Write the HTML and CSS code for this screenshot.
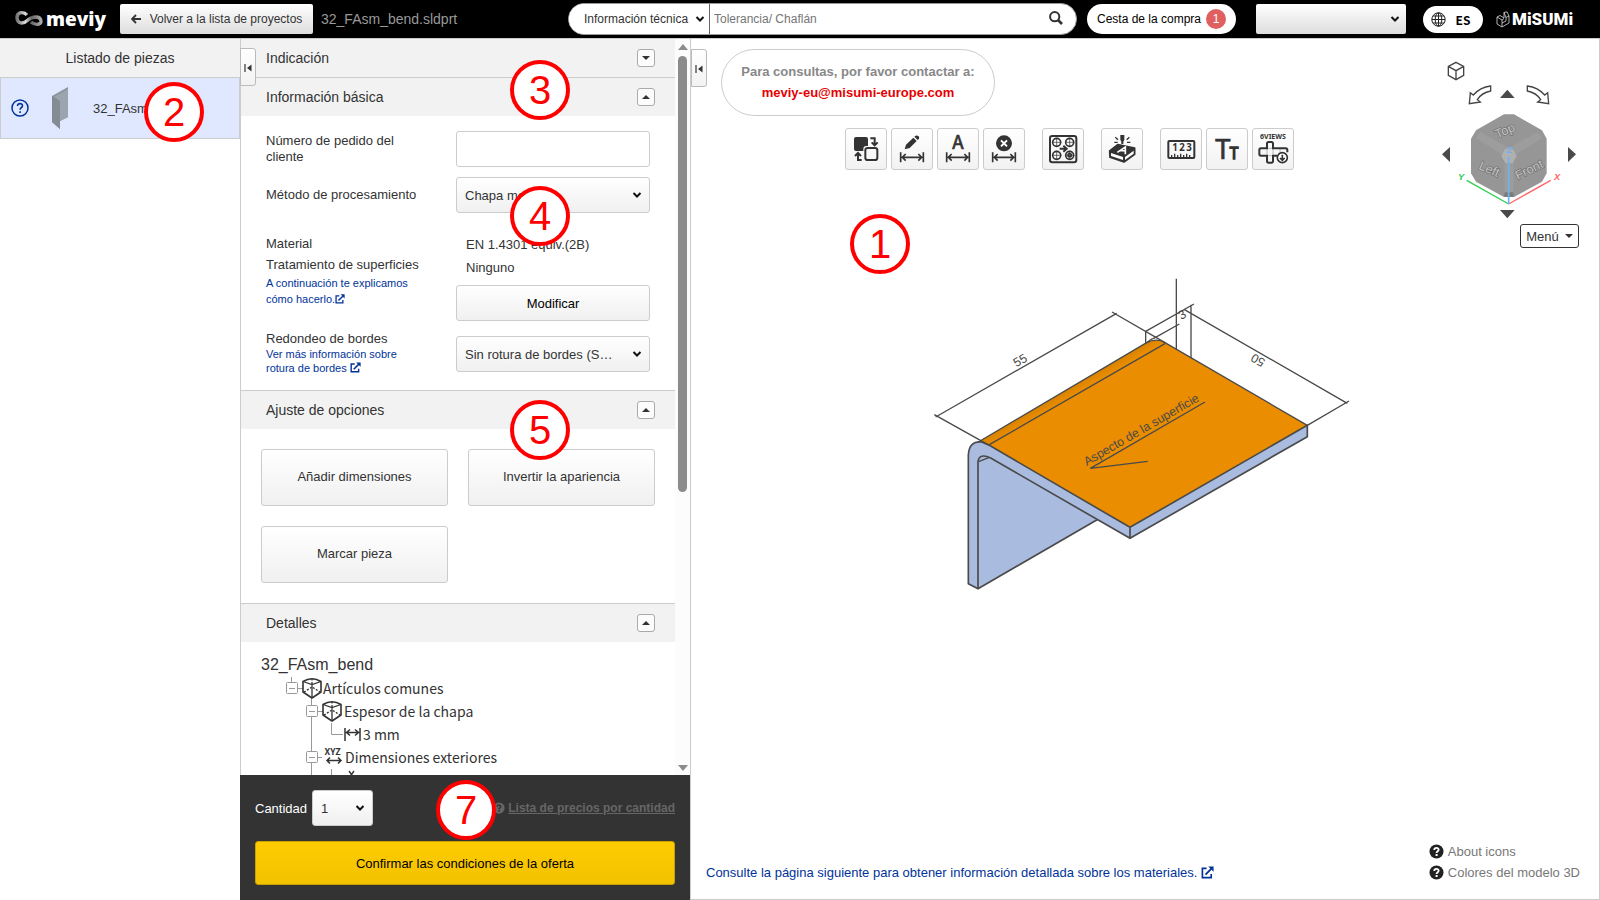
FILE: index.html
```html
<!DOCTYPE html>
<html lang="es">
<head>
<meta charset="UTF-8">
<meta name="viewport" content="width=device-width, initial-scale=1.0">
<title>meviy - 32_FAsm_bend.sldprt</title>
<link rel="stylesheet" href="styles.css">
</head>
<body>

<svg class="defs" width="0" height="0" aria-hidden="true">
  <symbol id="i-ext" viewBox="0 0 14 14">
    <path d="M6 2.500H1.500V12.500H11V8.500" fill="none" stroke="currentColor" stroke-width="1.800"/>
    <path d="M4.800 9.200L11 3" fill="none" stroke="currentColor" stroke-width="2"/>
    <path d="M7.800 0.500H13.500V6.200Z" fill="currentColor"/>
  </symbol>
  <symbol id="i-help" viewBox="0 0 16 16">
    <circle cx="8" cy="8" r="7.500" fill="currentColor"/>
    <path d="M5.600 6.400C5.700 3.400 10.400 3.500 10.300 6.200C10.200 7.800 8.100 7.800 8.100 9.600" fill="none" stroke="var(--mark, #fff)" stroke-width="2"/>
    <rect x="7" y="10.700" width="2.200" height="2.100" fill="var(--mark, #fff)"/>
  </symbol>
  <symbol id="i-collapse" viewBox="0 0 8 8">
    <path d="M1 0V8" stroke="#333" stroke-width="1.200"/>
    <path d="M7.500 0.500V7.500L3 4Z" fill="#333"/>
  </symbol>
  <symbol id="i-dim" viewBox="0 0 120 120">
    <path d="M26 70V100M94 70V100M31 85H89M41 75L31 85L41 95M79 75L89 85L79 95" fill="none" stroke="#333" stroke-width="5"/>
  </symbol>
  <symbol id="i-part" viewBox="0 0 20 22">
    <path d="M1 4.500Q10 -1 19 4.500V15L10 21L1 15Z" fill="none" stroke="#333" stroke-width="1.600" stroke-linejoin="round"/>
    <path d="M1 4.500L10 7.500L19 4.500M10 7.500V20" fill="none" stroke="#333" stroke-width="1.300"/>
    <path d="M10 1.500V7M2 15L10 10L18 15" fill="none" stroke="#333" stroke-width="1.300" stroke-dasharray="2 1.500"/>
  </symbol>
</svg>

<header class="topbar">
  <a class="logo" href="#" aria-label="meviy">
    <svg width="29" height="18" viewBox="0 0 29 18">
      <defs><linearGradient id="silver"><stop offset="0" stop-color="#777"/><stop offset=".35" stop-color="#ddd"/><stop offset=".6" stop-color="#666"/><stop offset="1" stop-color="#aaa"/></linearGradient></defs>
      <path d="M12 5C9 1.500 2 1.500 2 7.500C2 14 8 14.500 13 10C17 6.500 25 5 26 11C26.500 15 20 15.500 16 12" fill="none" stroke="url(#silver)" stroke-width="3.400"/>
    </svg>
    <span>meviy</span>
  </a>
  <button class="back" type="button">
    <svg width="10" height="10" viewBox="0 0 10 10"><path d="M10 5H1.500M5 1L1 5L5 9" fill="none" stroke="#333" stroke-width="1.800"/></svg>
    Volver a la lista de proyectos
  </button>
  <span class="filename">32_FAsm_bend.sldprt</span>

  <form class="search">
    <select aria-label="Tipo de búsqueda"><option>Información técnica</option></select>
    <input type="text" placeholder="Tolerancia/ Chaflán" aria-label="Buscar">
    <button type="button" aria-label="Buscar">
      <svg width="14" height="14" viewBox="0 0 14 14"><circle cx="5.700" cy="5.700" r="4.600" fill="none" stroke="#333" stroke-width="2"/><path d="M9 9L13 13" stroke="#333" stroke-width="2.600"/></svg>
    </button>
  </form>
  <button class="cart" type="button">Cesta de la compra <span class="badge">1</span></button>
  <select class="account" aria-label="Cuenta"><option></option></select>
  <button class="lang" type="button">
    <svg width="15" height="15" viewBox="0 0 15 15" fill="none" stroke="#222"><circle cx="7.500" cy="7.500" r="6.700"/><ellipse cx="7.500" cy="7.500" rx="3.300" ry="6.700"/><path d="M7.500 1V14M1 7.500H14M2 4H13M2 11H13"/></svg>
    ES
  </button>
  <a class="misumi" href="#">
    <svg width="14" height="17" viewBox="0 0 14 17" fill="none" stroke="#ddd" stroke-width=".8"><path d="M1 6L6 9V16L1 13ZM6 9L8 7.500M6 16L13 12V5L10 6.500V10L6 12M1 6L4 4.500L8 7L8 1.500L11 .8L13 5M8 1.500L10 6.500"/></svg>
    <span>MiSUMi</span>
  </a>
</header>

<main class="layout">
  <aside class="parts">
    <h2>Listado de piezas</h2>
    <a class="part" href="#">
      <svg width="18" height="18" viewBox="0 0 18 18" fill="none" stroke="#039"><circle cx="9" cy="9" r="8" stroke-width="1.500"/><path d="M6.500 7C6.500 3.700 11.600 3.900 11.500 6.900C11.400 8.700 9.100 8.700 9.100 10.800M9.100 12.200V14" stroke-width="1.600"/></svg>
      <svg class="thumb" width="20" height="44" viewBox="0 0 20 44">
        <path d="M1 10L17 1V31L9 35V43L1 36Z" fill="#8b949b"/>
        <path d="M3 11L17 3V31L9 35V15Z" fill="#9aa5b0"/>
        <path d="M1 10L9 15V43L1 36Z" fill="#838c93"/>
      </svg>
      <span>32_FAsm_bend</span>
    </a>
    <span class="callout c2">2</span>
  </aside>

  <section class="props">
    <button class="handle" type="button" aria-label="Contraer lista"><svg width="8" height="8"><use href="#i-collapse"/></svg></button>

    <div class="scroller">
      <div class="accordion">
        <div class="acc-head"><h3>Indicación</h3><button class="toggle" type="button" aria-label="Abrir"><i class="down"></i></button></div>

        <div class="acc-head"><h3>Información básica</h3><button class="toggle" type="button" aria-label="Cerrar"><i class="up"></i></button></div>
        <div class="basic">
          <label for="orderNo">Número de pedido del cliente</label>
          <input id="orderNo" class="field" type="text">

          <label for="method">Método de procesamiento</label>
          <select id="method" class="field"><option>Chapa metálica</option></select>

          <div class="material">
            <p>Material</p>
            <p>Tratamiento de superficies</p>
            <a class="wide" href="#">A continuación te explicamos cómo hacerlo.<svg width="10" height="10"><use href="#i-ext"/></svg></a>
          </div>
          <div class="material-value">
            <p>EN 1.4301 equiv.(2B)</p>
            <p>Ninguno</p>
            <button class="field" type="button">Modificar</button>
          </div>

          <div class="edges">
            <label for="edge">Redondeo de bordes</label>
            <a href="#">Ver más información sobre rotura de bordes <svg width="11" height="11"><use href="#i-ext"/></svg></a>
          </div>
          <select id="edge" class="field"><option>Sin rotura de bordes (S…</option></select>
        </div>

        <div class="acc-head"><h3>Ajuste de opciones</h3><button class="toggle" type="button" aria-label="Cerrar"><i class="up"></i></button></div>
        <div class="options">
          <button type="button">Añadir dimensiones</button>
          <button type="button">Invertir la apariencia</button>
          <button type="button">Marcar pieza</button>
        </div>

        <div class="acc-head"><h3>Detalles</h3><button class="toggle" type="button" aria-label="Cerrar"><i class="up"></i></button></div>
        <div class="details">
          <h4>32_FAsm_bend</h4>
          <ul class="tree">
            <li>
              <svg width="37" height="23" viewBox="0 0 37 23"><path d="M5.500 0V5M12 11.500H17M25.500 21V23" stroke="#999"/><rect x=".5" y="5.500" width="11" height="11" rx="1" fill="#fff" stroke="#999"/><path d="M3 11.500H9" stroke="#999"/><use href="#i-part" x="16" y="0" width="20" height="22"/></svg>
              Artículos comunes
            </li>
            <li>
              <svg width="58" height="23" viewBox="0 0 58 23"><path d="M25.500 0V23M32 11.500H37" stroke="#999"/><rect x="20.500" y="5.500" width="11" height="11" rx="1" fill="#fff" stroke="#999"/><path d="M23 11.500H29" stroke="#999"/><use href="#i-part" x="36" y="0" width="20" height="22"/></svg>
              Espesor de la chapa
            </li>
            <li>
              <svg width="77" height="23" viewBox="0 0 77 23"><path d="M25.500 0V23M45.500 0V11.500H57" fill="none" stroke="#999"/><path d="M59 5V18M74 5V18M60 9.500H73M64 6.500L60.500 9.500L64 12.500M69 6.500L72.500 9.500L69 12.500" fill="none" stroke="#333" stroke-width="1.500"/></svg>
              3 mm
            </li>
            <li>
              <svg width="59" height="23" viewBox="0 0 59 23"><path d="M25.500 0V23M32 11.500H36" stroke="#999"/><rect x="20.500" y="5.500" width="11" height="11" rx="1" fill="#fff" stroke="#999"/><path d="M23 11.500H29" stroke="#999"/><text x="38.500" y="9" font-size="9" font-weight="700" fill="#333">XYZ</text><path d="M41 14.500H55M44 11.500L41 14.500L44 17.500M52 11.500L55 14.500L52 17.500" fill="none" stroke="#333" stroke-width="1.500"/></svg>
              Dimensiones exteriores
            </li>
            <li>
              <svg width="79" height="23" viewBox="0 0 79 23"><path d="M25.500 0V23M45.500 0V11.500H57" fill="none" stroke="#999"/><path d="M63 2L68 9M68 2L63 9" stroke="#333" stroke-width="1.400"/></svg>
            </li>
          </ul>
        </div>
      </div>
      <div class="scrollbar"><i class="up"></i><div class="thumb-bar"></div><i class="down"></i></div>
    </div>

    <div class="order">
      <div class="order-row">
        <label for="qty">Cantidad</label>
        <select id="qty"><option>1</option></select>
        <a href="#"><svg width="12" height="12"><use href="#i-help"/></svg><span>Lista de precios por cantidad</span></a>
      </div>
      <button class="confirm" type="button">Confirmar las condiciones de la oferta</button>
      <span class="callout c7">7</span>
    </div>
    <span class="callout c3">3</span>
    <span class="callout c4">4</span>
    <span class="callout c5">5</span>
  </section>

  <section class="viewer">
    <button class="handle" type="button" aria-label="Contraer panel"><svg width="8" height="8"><use href="#i-collapse"/></svg></button>

    <div class="contact">
      Para consultas, por favor contactar a:
      <a href="mailto:meviy-eu@misumi-europe.com">meviy-eu@misumi-europe.com</a>
    </div>

    <div class="toolbar">
      <div class="group">
        <button type="button" aria-label="Invertir cara">
          <svg viewBox="0 0 120 120"><rect x="24" y="24" width="42" height="42" rx="6" fill="#333"/><rect x="52" y="51" width="48" height="48" rx="9" fill="#f8f8f8"/><rect x="58" y="57" width="36" height="36" rx="7" fill="none" stroke="#333" stroke-width="6"/><path d="M73 28H86V48M77 40L86 49L95 40M47 93H36V73M27 81L36 72L45 81" fill="none" stroke="#333" stroke-width="6"/></svg>
        </button>
        <button type="button" aria-label="Editar cota">
          <svg viewBox="0 0 120 120"><path d="M38 61L42 47L64 26L74 36L53 57ZM67 23L71 20Q76 18 80 22Q83 26 81 29L77 33Z" fill="#333"/><use href="#i-dim"/></svg>
        </button>
        <button type="button" aria-label="Cota con texto">
          <svg viewBox="0 0 120 120"><text class="cjk" x="60" y="60" font-size="56" text-anchor="middle" fill="#333" stroke="#333" stroke-width="2">A</text><use href="#i-dim"/></svg>
        </button>
        <button type="button" aria-label="Borrar cota">
          <svg viewBox="0 0 120 120"><circle cx="60" cy="43" r="24" fill="#333"/><path d="M51 34L69 52M69 34L51 52" stroke="#fff" stroke-width="6"/><use href="#i-dim"/></svg>
        </button>
      </div>
      <div class="group">
        <button type="button" aria-label="Agrupar agujeros">
          <svg viewBox="0 0 120 120" fill="none" stroke="#333"><rect x="21" y="21" width="79" height="79" rx="7" stroke-width="6"/><g stroke-width="5"><circle cx="41" cy="40" r="12"/><circle cx="80" cy="40" r="12"/><circle cx="41" cy="79" r="12"/><circle cx="80" cy="79" r="12"/><circle cx="80" cy="79" r="5"/></g><path d="M41 26V54M27 40H55M80 26V54M66 40H94M41 65V93M27 79H55M80 65V93M66 79H94" stroke-width="2"/><path d="M50 59H70M61 50L71 59L61 68" stroke-width="6"/></svg>
        </button>
      </div>
      <div class="group">
        <button type="button" aria-label="Grabado">
          <svg viewBox="0 0 120 120"><path d="M55 18H67V32L64 38V45H58V38L55 32Z" fill="#333"/><path d="M40 25L48 32M37 40H47M82 25L74 32M85 40H75" stroke="#333" stroke-width="4"/><path d="M23 66L47 47L98 57V76L66 99L24 85Z" fill="#333" stroke="#333" stroke-width="5" stroke-linejoin="round"/><path d="M27 72L63 84V93L27 81ZM69 84L95 65V74L69 93Z" fill="#fff"/><path d="M46 70L70 54L70 76M55 64L70 66" fill="none" stroke="#fff" stroke-width="5"/></svg>
        </button>
      </div>
      <div class="group">
        <button type="button" aria-label="Medir">
          <svg viewBox="0 0 120 120"><rect x="22" y="36" width="78" height="51" rx="3" fill="none" stroke="#333" stroke-width="6"/><path d="M32 86V78M41 86V74M50 86V78M59 86V74M68 86V78M77 86V74M86 86V78" stroke="#333" stroke-width="4"/><g font-size="29" font-weight="700" text-anchor="middle" fill="#333"><text x="42" y="67">1</text><text x="63" y="67">2</text><text x="84" y="67">3</text></g></svg>
        </button>
        <button type="button" aria-label="Tamaño de texto">
          <svg viewBox="0 0 120 120" fill="#333" stroke="#333"><text x="25" y="89" font-size="82" stroke-width="2">T</text><text x="68" y="89" font-size="46" stroke-width="4">T</text></svg>
        </button>
        <button type="button" aria-label="Seis vistas">
          <svg viewBox="0 0 120 120"><text x="60" y="31" font-size="21" font-weight="700" text-anchor="middle" fill="#333">6VIEWS</text><path d="M42 58H60V80M42 58V80H60M81 58V72" fill="none" stroke="#999" stroke-width="2"/><path d="M72 80H60V96Q60 101 55 101H47Q42 101 42 96V80H24Q19 80 19 75V63Q19 58 24 58H42V44Q42 39 47 39H55Q60 39 60 44V58H98Q103 58 103 63V70" fill="none" stroke="#333" stroke-width="6"/><circle cx="88" cy="86" r="15" fill="#fff" stroke="#333" stroke-width="5"/><path d="M88 77V93M81 87L88 94L95 87" fill="none" stroke="#333" stroke-width="5"/></svg>
        </button>
      </div>
    </div>

    <svg class="model" viewBox="-15 0 1380 990" role="img" aria-label="Modelo 3D de la pieza doblada">
      <defs>
        <linearGradient id="bend" gradientUnits="userSpaceOnUse" x1="428" y1="367" x2="441" y2="389"><stop offset="0" stop-color="#d98300"/><stop offset="1" stop-color="#eb8d00"/></linearGradient>
      </defs>
      <!-- vertical flange -->
      <path d="M174 956L534 748L212 564Q178 548 174 575Z" fill="#a9bbdf"/>
      <path d="M174 956L534 748" stroke="#4a4a4a" stroke-width="5"/>
      <!-- top face and bend -->
      <path d="M175 516L680 218Q710 203 735 218L1162 466L630 772L208 526Z" fill="#eb8d00"/>
      <path d="M175 516L680 218Q710 203 735 221L208 526Z" fill="url(#bend)"/>
      <!-- sheet thickness -->
      <path d="M145 941V555Q147 512 185 516L208 526L630 772V805L212 564Q178 548 174 575V956Z" fill="#a9bbdf"/>
      <path d="M630 772L1162 466V500L630 805Z" fill="#a9bbdf"/>
      <g fill="none" stroke="#4a4a4a" stroke-width="5" stroke-linejoin="round">
        <path d="M145 941V555Q147 512 185 516L208 526L630 772V805L212 564Q178 548 174 575V956Z"/>
        <path d="M630 772L1162 466V500L630 805"/>
        <path d="M175 516L680 218Q710 203 735 218L1162 466M208 524L735 221M176 575L208 562" stroke-width="4"/>
      </g>
      <!-- dimension lines -->
      <g fill="none" stroke="#4a4a4a" stroke-width="4">
        <path d="M43 434L208 526M47 441L590 130M576 126L735 218"/>
        <path d="M769 26V238M813 104V265M677 184V222M677 184L822 102M700 206L778 162M680 218Q700 203 700 206"/>
        <path d="M792 118L1282 400M1162 466L1287 393"/>
      </g>
      <g fill="#4a4a4a" font-size="37">
        <text transform="translate(289 292) rotate(-30)">55</text>
        <text transform="translate(1038 270) rotate(210)">50</text>
        <text transform="translate(784 150) rotate(-30)">3</text>
        <text transform="translate(500 588) rotate(-30)">Aspecto de la superficie</text>
      </g>
      <path d="M855 396L511 595L683 574" fill="none" stroke="#4a4a4a" stroke-width="4"/>
    </svg>

    <svg class="navcube" viewBox="1080 180 420 480" role="img" aria-label="Cubo de orientación">
      <g fill="none" stroke="#444" stroke-width="4">
        <path d="M1128 187L1151 199V226L1128 239L1105 226V199ZM1105 199L1128 212L1151 199M1128 212V239"/>
        <path d="M1232 258V273Q1205 278 1192 299L1201 306L1168 311L1171 278L1180 285Q1200 262 1232 258Z"/>
        <path d="M1342 258V273Q1369 278 1382 299L1373 306L1406 311L1403 278L1394 285Q1374 262 1342 258Z"/>
      </g>
      <path d="M1282 269L1304 294H1260ZM1282 655L1304 630H1260ZM1086 463L1110 441V486ZM1488 463L1464 441V486Z" fill="#4a4a4a"/>
      <path d="M1272 343H1302L1386 391L1400 416V520L1386 545L1302 591H1272L1188 545L1173 520V416L1188 391Z" fill="#969696"/>
      <path d="M1188 415L1200 395L1286 444L1374 395L1386 415L1308 463L1300 487V588H1274V487L1264 463Z" fill="#9d9d9d"/>
      <path d="M1276 446H1298L1310 468L1298 489H1276L1264 468Z" fill="#b0b0b0"/>
      <path d="M1274 577H1300L1302 591H1272Z" fill="#7c7c7c"/>
      <g class="faces">
        <text transform="translate(1252 416) rotate(-24)">Top</text>
        <text transform="translate(1194 506) rotate(24)">Left</text>
        <text transform="translate(1313 540) rotate(-26)">Front</text>
      </g>
      <g fill="none" stroke-width="4">
        <path d="M1160 541L1286 612" stroke="#3c5"/><path d="M1286 612L1412 541" stroke="#f66"/><path d="M1286 612V470" stroke="#6bb3f5" stroke-width="5"/>
      </g>
      <g font-size="28" font-style="italic" font-weight="700" text-anchor="middle">
        <text x="1143" y="540" fill="#3c5">Y</text><text x="1431" y="540" fill="#f66">X</text><text x="1288" y="458" fill="#6bb3f5">Z</text>
      </g>
    </svg>
    <button class="menu" type="button">Menú <i class="down"></i></button>

    <footer class="foot">
      <a class="materials" href="#">Consulte la página siguiente para obtener información detallada sobre los materiales. <svg width="13" height="13"><use href="#i-ext"/></svg></a>
      <div class="help">
        <a href="#"><svg width="15" height="15"><use href="#i-help"/></svg>About icons</a>
        <a href="#"><svg width="15" height="15"><use href="#i-help"/></svg>Colores del modelo 3D</a>
      </div>
    </footer>
    <span class="callout c1">1</span>
  </section>
</main>

</body>
</html>
```

FILE: styles.css
```css
:root {
  --line: #ccc;
  --head: #f2f2f2;
  --ink: #333;
  --link: #039;
  --chevron: url("data:image/svg+xml,%3Csvg xmlns='http://www.w3.org/2000/svg' width='10' height='8'%3E%3Cpath d='M1.500 2L5 5.500L8.500 2' fill='none' stroke='%23111' stroke-width='2'/%3E%3C/svg%3E");
}
* { box-sizing: border-box; }
html, body {
  height: 100%;
  margin: 0;
}
body {
  display: flex;
  flex-direction: column;
  overflow: hidden;
  color: var(--ink);
  background: #fff;
  font-family: "Liberation Sans", Arial, sans-serif;
  font-size: 13px;
}
h2, h3, h4, p, ul {
  margin: 0;
  padding: 0;
  font-weight: 400;
}
button, select, input {
  font-family: inherit;
  font-size: 13px;
  color: inherit;
  margin: 0;
}
button { cursor: pointer; }
a {
  color: var(--link);
  text-decoration: none;
}
select {
  appearance: none;
  background: #fff var(--chevron) no-repeat right 8px center;
}
.defs { position: absolute; }

/* small triangles */
.up, .down {
  display: block;
  border: 4px solid transparent;
}
.up { border-top: 0; border-bottom-color: currentColor; }
.down { border-bottom: 0; border-top-color: currentColor; }

/* top bar */
.topbar {
  display: flex;
  align-items: center;
  flex: none;
  height: 38px;
  padding-left: 15px;
  padding-right: 29px;
  background: #000;
}
.logo {
  display: flex;
  align-items: center;
  gap: 2px;
  width: 105px;
  color: #fff;
  font-family: "Open Sans", sans-serif;
  font-size: 19px;
  font-weight: 800;
  line-height: 24px;
}
.back {
  display: flex;
  align-items: center;
  justify-content: center;
  gap: 9px;
  width: 193px;
  height: 30px;
  padding: 0;
  border: 0;
  border-radius: 2px;
  font-size: 12px;
  background: linear-gradient(#fff, #ddd);
}
.filename {
  margin-left: 8px;
  color: #999;
  font-size: 14px;
}
.search {
  display: flex;
  width: 509px;
  height: 32px;
  margin-left: auto;
  border: 1px solid #999;
  border-radius: 16px;
  background: #fff;
  overflow: hidden;
}
.search select {
  width: 141px;
  padding: 0 0 0 15px;
  border: 0;
  border-right: 1px solid #666;
  background-position: right 4px center;
  font-size: 12px;
}
.search input {
  flex: 1;
  min-width: 0;
  border: 0;
  padding: 0 4px;
  outline: none;
  font-size: 12px;
}
.search input::placeholder { color: #757575; }
.search button {
  width: 40px;
  padding: 0;
  border: 0;
  background: none;
}
.cart {
  display: flex;
  align-items: center;
  justify-content: center;
  gap: 5px;
  width: 149px;
  height: 30px;
  margin-left: 10px;
  padding: 0;
  border: 0;
  border-radius: 15px;
  background: #fff;
  color: #000;
  font-size: 12px;
}
.badge {
  width: 20px;
  border-radius: 10px;
  background: #e06060;
  color: #fff;
  line-height: 20px;
}
.account {
  width: 150px;
  height: 30px;
  margin-left: 20px;
  border: 0;
  border-radius: 2px;
  background: var(--chevron) no-repeat right 6px center, linear-gradient(#fff, #ddd);
}
.lang {
  display: flex;
  align-items: center;
  justify-content: center;
  gap: 10px;
  width: 60px;
  height: 27px;
  margin-left: 17px;
  padding: 0 5px 0 0;
  border: 0;
  border-radius: 14px;
  background: #fff;
  color: #000;
  font-family: "Noto Sans CJK JP", sans-serif;
  font-size: 12px;
  font-weight: 700;
}
.misumi {
  display: flex;
  align-items: center;
  gap: 2px;
  width: 75px;
  margin-left: 13px;
  color: #fff;
  font-family: Roboto, sans-serif;
  font-size: 17px;
  font-weight: 900;
}
.misumi svg { flex: none; }

/* columns */
.layout {
  display: flex;
  flex: 1;
  min-height: 0;
  border-top: 1px solid var(--line);
}
.parts {
  position: relative;
  width: 240px;
  flex: none;
}
.parts h2 {
  height: 38px;
  background: var(--head);
  font-size: 14px;
  line-height: 38px;
  text-align: center;
}
.part {
  display: flex;
  align-items: center;
  height: 62px;
  padding-left: 10px;
  border: 1px solid var(--line);
  background: #dfe8ff;
  color: var(--ink);
}
.thumb { margin: 0 22px; }

.props {
  position: relative;
  display: flex;
  flex-direction: column;
  flex: none;
  width: 450px;
}
.handle {
  position: absolute;
  z-index: 1;
  top: 9px;
  left: 0;
  width: 16px;
  height: 38px;
  padding: 0;
  border: 1px solid #bbb;
  border-radius: 0 3px 3px 0;
  background: linear-gradient(#fff, #f2f2f2);
}
.scroller {
  display: flex;
  flex: 1;
  min-height: 0;
  border-left: 1px solid var(--line);
}
.accordion {
  flex: 1;
  overflow: hidden;
}
.scrollbar {
  display: flex;
  flex-direction: column;
  align-items: center;
  width: 15px;
  padding: 5px 0 4px;
  background: #fcfcfc;
  color: #8b8b8b;
}
.scrollbar .up, .scrollbar .down { border-width: 6px 5px; }
.scrollbar .up { border-top: 0; }
.scrollbar .down { border-bottom: 0; margin-top: auto; }
.thumb-bar {
  width: 9px;
  height: 60%;
  margin-top: 6px;
  border-radius: 5px;
  background: #8b8b8b;
}
.acc-head {
  display: flex;
  align-items: center;
  justify-content: space-between;
  height: 39px;
  padding: 0 20px 0 25px;
  border-top: 1px solid var(--line);
  background: var(--head);
}
.acc-head:first-child {
  height: 38px;
  border-top: 0;
}
.acc-head h3 { font-size: 14px; }
.toggle {
  display: flex;
  align-items: center;
  justify-content: center;
  width: 18px;
  height: 18px;
  padding: 0;
  border: 1px solid #aaa;
  border-radius: 3px;
  background: #fcfcfc;
}
.basic {
  display: grid;
  grid-template-columns: 190px 194px;
  align-items: start;
  row-gap: 10px;
  padding: 15px 25px;
}
.basic > label {
  width: 150px;
  line-height: 16px;
  align-self: center;
}
.basic > label[for="method"] { width: auto; }
.field {
  width: 100%;
  height: 36px;
  padding: 0 8px;
  border: 1px solid var(--line);
  border-radius: 3px;
}
select.field, #qty {
  background: var(--chevron) no-repeat right 7px center, linear-gradient(#fff, #f0f0f0);
}
button.field {
  background: linear-gradient(#fff, #f0f0f0);
  color: #000;
}
.basic a {
  display: block;
  width: 150px;
  font-size: 11px;
  line-height: 14px;
}
.basic a.wide { line-height: 16px; }
.basic a svg { vertical-align: -1px; }
.material, .material-value { padding-top: 10px; }
.material p { line-height: 21px; }
.material-value p {
  padding-left: 10px;
  line-height: 23px;
}
.material-value .field { margin-top: 6px; }
.edges label {
  display: block;
  line-height: 16px;
}
#edge { margin-top: 5px; }
.options {
  display: grid;
  grid-template-columns: 1fr 1fr;
  gap: 20px;
  padding: 20px;
}
.options button {
  height: 57px;
  padding-bottom: 3px;
  border: 1px solid var(--line);
  border-radius: 3px;
  background: linear-gradient(#fff, #f0f0f0);
}
.details { padding: 11px 20px; }
.details h4 {
  font-size: 16px;
  line-height: 24px;
}
.tree {
  padding-left: 25px;
  list-style: none;
}
.tree li {
  display: flex;
  height: 23px;
  font-family: "Noto Sans CJK JP", sans-serif;
  font-size: 14px;
  line-height: 23px;
  white-space: nowrap;
}
.tree svg { flex: none; }

.order {
  position: relative;
  flex: none;
  padding: 15px;
  background: #333;
}
.order-row {
  display: flex;
  align-items: center;
  color: #fff;
}
#qty {
  width: 61px;
  height: 36px;
  margin-left: 5px;
  padding: 0 8px;
  border: 1px solid var(--line);
  border-radius: 3px;
  color: var(--ink);
}
.order-row a {
  --mark: #333;
  display: flex;
  align-items: center;
  gap: 3px;
  margin-left: auto;
  color: #666;
  font-size: 12px;
  font-weight: 700;
}
.order-row a span { text-decoration: underline; }
.confirm {
  width: 100%;
  height: 44px;
  margin-top: 15px;
  border: 1px solid #c9a000;
  border-radius: 3px;
  background: linear-gradient(#fc0, #f2c200);
  color: #000;
}

/* 3D viewer */
.viewer {
  position: relative;
  display: flex;
  flex-direction: column;
  flex: 1;
  min-width: 0;
  border: 1px solid var(--line);
  border-top: 0;
}
.viewer .handle { top: 10px; }
.contact {
  align-self: flex-start;
  width: 274px;
  margin: 10px 0 0 30px;
  padding: 11px 0 12px;
  border: 1px solid var(--line);
  border-radius: 34px;
  color: #888;
  font-weight: 700;
  line-height: 21px;
  text-align: center;
}
.contact a {
  display: block;
  color: #e60000;
}
.toolbar {
  display: flex;
  justify-content: center;
  gap: 17px;
  margin-top: 12px;
  padding-right: 152px;
}
.group {
  display: flex;
  gap: 4px;
}
.group button {
  width: 42px;
  height: 42px;
  padding: 0;
  border: 1px solid var(--line);
  border-radius: 3px;
  background: linear-gradient(#fff, #f2f2f2);
}
.group svg {
  display: block;
  width: 40px;
  height: 40px;
  font-family: "Noto Sans", sans-serif;
}
.cjk { font-family: "Noto Sans CJK JP", sans-serif; }
.model {
  width: 460px;
  margin: 100px auto 0;
}
.navcube {
  position: absolute;
  top: 21px;
  right: 19px;
  width: 140px;
  height: 160px;
}
.faces {
  fill: #c4c4c4;
  stroke: #707070;
  stroke-width: 4px;
  paint-order: stroke;
  font-size: 38px;
}
.menu {
  position: absolute;
  top: 185px;
  right: 20px;
  display: flex;
  align-items: center;
  justify-content: center;
  gap: 6px;
  width: 59px;
  height: 24px;
  padding: 0;
  border: 1px solid #333;
  border-radius: 3px;
  background: #fff;
}
.foot {
  display: flex;
  align-items: flex-end;
  justify-content: space-between;
  margin-top: auto;
  padding: 0 19px 16px 15px;
  line-height: 21px;
}
.materials svg { vertical-align: -2px; }
.help a {
  display: flex;
  align-items: center;
  gap: 4px;
  color: #777;
}
.help svg { color: #222; }

/* numbered callouts */
.callout {
  position: absolute;
  z-index: 2;
  width: 60px;
  height: 60px;
  border: 4px solid #f00;
  border-radius: 50%;
  background: #fff;
  color: #f00;
  font-size: 40px;
  line-height: 52px;
  text-align: center;
}
.c1 { top: 175px; left: 159px; }
.c2 { top: 43px; left: 144px; }
.c3 { top: 21px; left: 270px; }
.c4 { top: 147px; left: 270px; }
.c5 { top: 361px; left: 270px; }
.c7 { top: 5px; left: 196px; }
```
